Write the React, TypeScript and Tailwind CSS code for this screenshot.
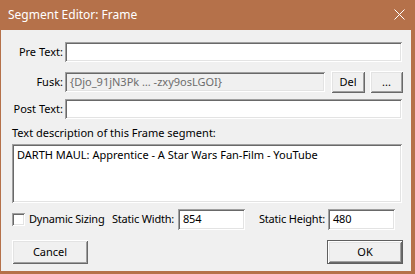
import React from 'react';

// classic Win32 bevels
const sunken =
  'shadow-[inset_1px_1px_0_#a0a0a0,inset_-1px_-1px_0_#ffffff,inset_2px_2px_0_#696969,inset_-2px_-2px_0_#e3e3e3]';
const raised =
  'shadow-[inset_1px_1px_0_#ffffff,inset_-1px_-1px_0_#696969,inset_2px_2px_0_#e3e3e3,inset_-2px_-2px_0_#a0a0a0]';

const Field: React.FC<{ value?: string; disabled?: boolean; className?: string }> = ({
  value = '',
  disabled,
  className = '',
}) => (
  <div
    className={`h-[20px] shrink-0 flex items-center pl-[5px] whitespace-nowrap ${sunken} ${
      disabled ? 'bg-[#f0f0f0] text-[#6d6d6d]' : 'bg-white text-black'
    } ${className}`}
  >
    {value}
  </div>
);

const Button: React.FC<{ label: string; className?: string; isDefault?: boolean }> = ({
  label,
  className = '',
  isDefault,
}) => (
  <div
    className={`shrink-0 flex items-center justify-center bg-[#f0f0f0] text-black ${raised} ${
      isDefault ? 'border border-[#5f5f5f]' : ''
    } ${className}`}
  >
    {label}
  </div>
);

const Label: React.FC<{ text: string }> = ({ text }) => (
  <div className="w-[53px] shrink-0 pr-[2px] text-right text-black whitespace-nowrap">{text}</div>
);

export default function App() {
  return (
    <div
      className="w-[415px] h-[274px] bg-[#b5714a] flex flex-col overflow-hidden whitespace-nowrap"
      style={{ fontFamily: '"Noto Sans", "Open Sans", sans-serif' }}
    >
      <header className="h-[30px] flex items-center justify-between pl-[8px] pr-[10px] text-white text-[12px]">
        <span>Segment Editor: Frame</span>
        <svg width="11" height="11" viewBox="0 0 11 11" className="mb-[1px]">
          <path d="M0.5 0.5 L10.5 10.5 M10.5 0.5 L0.5 10.5" stroke="#ffffff" strokeWidth="1" />
        </svg>
      </header>

      <div className="flex-1 ml-[1px] mr-[4px] mb-[3px] bg-[#f0f0f0] pl-[11px] pr-[9px] flex flex-col text-[11px]">
        {/* Pre Text */}
        <div className="mt-[12px] h-[20px] flex items-center">
          <Label text="Pre Text:" />
          <Field className="flex-1" />
        </div>

        {/* Fusk */}
        <div className="mt-[9px] h-[22px] flex items-center">
          <Label text="Fusk:" />
          <Field disabled value="{Djo_91jN3Pk … -zxy9osLGOI}" className="w-[260px]" />
          <Button label="Del" className="ml-[6px] w-[34px] h-[22px]" />
          <Button label="..." className="ml-[5px] w-[33px] h-[22px]" />
        </div>

        {/* Post Text */}
        <div className="mt-[6px] h-[20px] flex items-center">
          <Label text="Post Text:" />
          <Field className="flex-1" />
        </div>

        <div className="mt-[6px] h-[16px] flex items-center text-black">
          Text description of this Frame segment:
        </div>

        <div className={`mt-[3px] h-[59px] bg-white px-[5px] pt-[3px] text-black ${sunken}`}>
          DARTH MAUL: Apprentice - A Star Wars Fan-Film - YouTube
        </div>

        {/* sizing row */}
        <div className="mt-[6px] h-[21px] flex items-center text-black tracking-[-0.2px]">
          <div className="w-[100px] shrink-0 flex items-center">
            <div className={`w-[13px] h-[13px] shrink-0 bg-white ${sunken}`} />
            <span className="ml-[4px]">Dynamic Sizing</span>
          </div>
          <span className="w-[66px] shrink-0 text-right pr-[5px]">Static Width:</span>
          <Field value="854" className="w-[67px] h-[21px] pl-[4px]" />
          <span className="w-[83px] shrink-0 text-right pr-[3px]">Static Height:</span>
          <Field value="480" className="w-[67px] h-[21px] pl-[4px]" />
        </div>

        {/* buttons */}
        <div className="mt-[10px] flex items-center justify-between">
          <Button label="Cancel" className="w-[76px] h-[24px]" />
          <Button label="OK" isDefault className="w-[76px] h-[24px] mr-[-1px]" />
        </div>
      </div>
    </div>
  );
}
